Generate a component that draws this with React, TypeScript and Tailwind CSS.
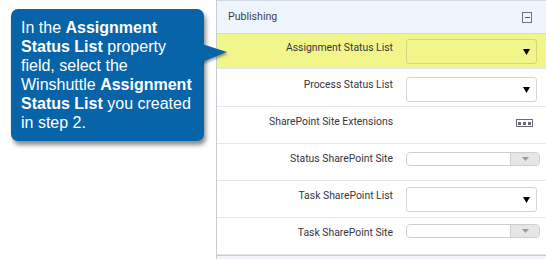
import React from 'react';

type RowProps = {
    label: string;
    kind: 'select' | 'combo' | 'dots';
    height: string;
    labelTop: string;
    ctrlTop: string;
    highlight?: boolean;
};

const Caret = ({ className }: { className: string }) => (
    <svg width="7" height="6" viewBox="0 0 7 6" className={className}>
        <polygon points="0,0 7,0 3.5,6" fill="currentColor" />
    </svg>
);

const Row: React.FC<RowProps> = ({ label, kind, height, labelTop, ctrlTop, highlight }) => (
    <div className={`flex items-start border-b border-[#e4e6ea] ${height} ${highlight ? 'bg-[#f2f68a]' : 'bg-white'}`}>
        <div className={`w-[176px] shrink-0 text-right text-[10.4px] leading-[14px] text-[#36363f] ${labelTop}`}>
            {label}
        </div>
        <div className={`ml-[13px] ${ctrlTop}`}>
            {kind === 'select' && (
                <div className={`flex h-[25px] w-[131px] items-center justify-end rounded-[3px] border pr-[6px] ${highlight ? 'border-[#d3d77c]' : 'border-[#d4d4d4]'}`}>
                    <Caret className="text-black" />
                </div>
            )}
            {kind === 'combo' && (
                <div className="flex h-[14px] w-[134px] overflow-hidden rounded-[4px] border border-[#cfcfcf]">
                    <div className="flex-1" />
                    <div className="flex w-[29px] items-center justify-center border-l border-[#cfcfcf] bg-[#e6e6e6]">
                        <svg width="7" height="4" viewBox="0 0 7 4">
                            <polygon points="0,0 7,0 3.5,4" fill="#9a9a9a" />
                        </svg>
                    </div>
                </div>
            )}
            {kind === 'dots' && (
                <div className="ml-[110px] flex h-[8px] w-[17px] items-center justify-center gap-[2px] border border-[#666b73]">
                    <span className="h-[3px] w-[3px] bg-[#666b73]" />
                    <span className="h-[3px] w-[3px] bg-[#666b73]" />
                    <span className="h-[3px] w-[3px] bg-[#666b73]" />
                </div>
            )}
        </div>
    </div>
);

const App: React.FC = () => {
    return (
        <div className="flex h-[259px] w-[546px] overflow-hidden bg-white" style={{ fontFamily: 'Roboto, "Liberation Sans", sans-serif' }}>
            <div className="w-[216px] shrink-0 pl-[11px] pt-[9px]">
                <div className="relative z-10 h-[132px] w-[193px] rounded-[7px] bg-[#0864a9] px-[10px] pt-[9px] text-[16px] leading-[19px] text-white shadow-[2px_4px_4px_rgba(0,0,0,0.45)]" style={{ fontFamily: '"Liberation Sans", Arial, sans-serif' }}>
                    In the <b>Assignment Status List</b> property field, select the Winshuttle <b>Assignment Status List</b> you created in step 2.
                    <svg width="26" height="20" viewBox="0 0 26 20" className="absolute left-[191px] top-[35px] drop-shadow-[1px_2px_1px_rgba(0,0,0,0.35)]">
                        <polygon points="0,0 25,8 0,18" fill="#0864a9" />
                    </svg>
                </div>
            </div>
            <div className="flex flex-1 flex-col border-l border-[#c6cdd6]">
                <div className="flex h-[34px] shrink-0 items-center justify-between border-y border-[#d2d8e0] bg-[#eef5fd] pl-[11px] pr-[14px]">
                    <span className="text-[10.6px] text-[#3f3f4c]">Publishing</span>
                    <div className="flex h-[11px] w-[10px] items-center justify-center border border-[#6f737a]">
                        <span className="h-px w-[5px] bg-[#555]" />
                    </div>
                </div>
                <Row label="Assignment Status List" kind="select" height="h-[35px]" labelTop="mt-[7px]" ctrlTop="mt-[5px]" highlight />
                <Row label="Process Status List" kind="select" height="h-[38px]" labelTop="mt-[9px]" ctrlTop="mt-[8px]" />
                <Row label="SharePoint Site Extensions" kind="dots" height="h-[37px]" labelTop="mt-[8px]" ctrlTop="mt-[12px]" />
                <Row label="Status SharePoint Site" kind="combo" height="h-[37px]" labelTop="mt-[8px]" ctrlTop="mt-[8px]" />
                <Row label="Task SharePoint List" kind="select" height="h-[37px]" labelTop="mt-[8px]" ctrlTop="mt-[6px]" />
                <div className="border-b border-[#c6cdd6]">
                    <Row label="Task SharePoint Site" kind="combo" height="h-[37px]" labelTop="mt-[8px]" ctrlTop="mt-[6px]" />
                </div>
                <div className="flex-1 bg-[#eef5fd]" />
            </div>
        </div>
    );
};

export default App;
